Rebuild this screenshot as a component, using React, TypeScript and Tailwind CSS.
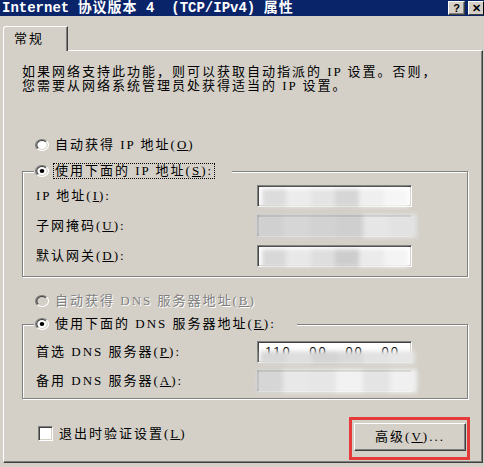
import React from 'react';

const ui = "font-['Liberation_Serif','Noto_Sans_CJK_SC',serif] text-[13px] tracking-[2px] text-black";

function Radio({ checked = false, disabled = false }: { checked?: boolean; disabled?: boolean }) {
  return (
    <svg width="14" height="12" viewBox="0 0 12 12" preserveAspectRatio="none" className="shrink-0">
      <circle cx="6" cy="6" r="5.5" fill={disabled ? '#d4d0c8' : '#fff'} />
      <path d="M2.1 9.9 A5.5 5.5 0 0 1 9.9 2.1" stroke="#808080" fill="none" />
      <path d="M9.9 2.1 A5.5 5.5 0 0 1 2.1 9.9" stroke="#fff" fill="none" />
      <path d="M2.8 9.2 A4.5 4.5 0 0 1 9.2 2.8" stroke="#404040" fill="none" />
      <path d="M9.2 2.8 A4.5 4.5 0 0 1 2.8 9.2" stroke="#d4d0c8" fill="none" />
      {checked && <circle cx="6" cy="6" r="2" fill="#000" />}
    </svg>
  );
}

// blurred address field (the screenshot hides the values)
function Field({ tones, cover = false, text }: { tones: string[]; cover?: boolean; text?: string[] }) {
  return (
    <div className="relative h-[22px] w-[155px] border border-t-[#808080] border-l-[#808080] border-b-white border-r-white bg-white shadow-[inset_1px_1px_0_#404040,inset_-1px_-1px_0_#d4d0c8]">
      {text && (
        <div className="flex h-full items-center justify-around pr-2 pl-1 font-['Liberation_Sans',sans-serif] text-[13px]">
          {text.map((t, i) => (
            <span key={i}>{t}</span>
          ))}
        </div>
      )}
      <div
        className={
          cover
            ? 'absolute -left-[2px] -right-[6px] -top-[2px] -bottom-[2px] flex blur-[2px]'
            : text
              ? 'absolute left-[2px] -right-[4px] top-[9px] -bottom-[2px] flex blur-[2px]'
              : 'absolute left-[4px] right-[3px] top-[3px] -bottom-[1px] flex blur-[2px]'
        }
      >
        {tones.map((t, i) => (
          <div key={i} className={`flex-1 ${t}`} />
        ))}
      </div>
    </div>
  );
}

function Row({ label, children }: { label: React.ReactNode; children: React.ReactNode }) {
  return (
    <div className="grid h-[22px] grid-cols-[221px_155px] items-center">
      <div className="whitespace-nowrap">{label}</div>
      {children}
    </div>
  );
}

export default function App() {
  return (
    <div className={`h-[467px] w-[484px] overflow-hidden bg-[#d4d0c8] ${ui}`}>
      {/* Title bar */}
      <div className="relative flex h-[16px] items-center bg-[#0a246a] pt-px pl-[2px] font-['Liberation_Mono','Noto_Sans_CJK_SC',monospace] text-[14px] font-bold leading-[15px] tracking-normal text-white whitespace-pre">
        <span>Internet </span>
        <span className="tracking-[1px]">协议版本</span>
        <span> 4  (TCP/IPv4) </span>
        <span className="tracking-[1px]">属性</span>
        <div className="ml-auto flex h-[14px] self-start gap-[3px]">
          <div className="flex w-[17px] items-center justify-center border border-t-white border-l-white border-b-[#404040] border-r-[#404040] bg-[#d4d0c8] font-['Liberation_Sans',sans-serif] text-[11px] leading-none text-black shadow-[inset_-1px_-1px_0_#808080]">
            ?
          </div>
          <div className="flex w-[16px] items-center justify-center border border-t-white border-l-white border-b-[#404040] bg-[#d4d0c8] font-['Liberation_Sans',sans-serif] text-[11px] leading-none text-black">
            ✕
          </div>
        </div>
      </div>

      {/* Tab */}
      <div className="mt-[10px] flex pl-[3px]">
        <div className="relative z-10 flex h-[25px] w-[65px] items-center rounded-tl-[3px] border-l border-t border-r border-l-white border-t-white border-r-[#404040] bg-[#d4d0c8] pl-[10px] shadow-[inset_-1px_0_0_#808080]">
          常规
        </div>
      </div>

      {/* Panel */}
      <div className="-mt-px ml-[3px] h-[413px] w-[480px] border border-t-white border-l-white border-r-[#404040] border-b-[#404040] shadow-[inset_-1px_-1px_0_#808080]">
        <p className="mt-[14px] pl-[18px] leading-[14px] whitespace-nowrap">
          如果网络支持此功能，则可以获取自动指派的 IP 设置。否则，
          <br />
          您需要从网络系统管理员处获得适当的 IP 设置。
        </p>

        <div className="mt-[44px] ml-[31px] flex h-4 items-center gap-[6px] whitespace-nowrap">
          <Radio />
          <span>
            自动获得 IP 地址(<u>O</u>)
          </span>
        </div>

        {/* IP group */}
        <div className="relative mt-[18px] ml-[18px] w-[446px] border border-[#808080] pt-[13px] pb-[9px] pl-[13px] shadow-[1px_1px_0_#fff,inset_1px_1px_0_#fff]">
          <div className="absolute -top-[9px] left-[11px] flex h-4 w-[198px] items-center gap-[4px] bg-[#d4d0c8] pl-px whitespace-nowrap">
            <Radio checked />
            <span className="border border-dotted border-black px-px leading-[14px]">
              使用下面的 IP 地址(<u>S</u>):
            </span>
          </div>
          <div className="flex flex-col gap-[8px]">
            <Row label={<>IP 地址(<u>I</u>):</>}>
              <Field tones={['bg-[#dcdcdc]', 'bg-[#ececec]', 'bg-[#e4e4e4]', 'bg-[#d6d6d6]', 'bg-[#efefef]', 'bg-[#f6f6f6]']} />
            </Row>
            <Row label={<>子网掩码(<u>U</u>):</>}>
              <Field cover tones={['bg-[#d0d0d0]', 'bg-[#d6d6d6]', 'bg-[#d2d2d2]', 'bg-[#cfcfcf]', 'bg-[#e6e6e6]', 'bg-[#e2e2e2]']} />
            </Row>
            <Row label={<>默认网关(<u>D</u>):</>}>
              <Field tones={['bg-[#d8d8d8]', 'bg-[#e8e8e8]', 'bg-[#dedede]', 'bg-[#cdcdcd]', 'bg-[#ebebeb]', 'bg-[#f4f4f4]']} />
            </Row>
          </div>
        </div>

        <div className="mt-[16px] ml-[31px] flex h-4 items-center gap-[6px] whitespace-nowrap text-[#808080] [text-shadow:1px_1px_0_#fff]">
          <Radio disabled />
          <span>
            自动获得 DNS 服务器地址(<u>B</u>)
          </span>
        </div>

        {/* DNS group */}
        <div className="relative mt-[15px] ml-[18px] w-[446px] border border-[#808080] pt-[16px] pb-[6px] pl-[13px] shadow-[1px_1px_0_#fff,inset_1px_1px_0_#fff]">
          <div className="absolute -top-[9px] left-[11px] flex h-4 w-[263px] items-center gap-[6px] bg-[#d4d0c8] pl-px whitespace-nowrap">
            <Radio checked />
            <span>
              使用下面的 DNS 服务器地址(<u>E</u>):
            </span>
          </div>
          <div className="flex flex-col gap-[7px]">
            <Row label={<>首选 DNS 服务器(<u>P</u>):</>}>
              <Field text={['110', '.', '00', '.', '00', '.', '00']} tones={['bg-[#d8d8d8]', 'bg-[#dedede]', 'bg-[#d4d4d4]', 'bg-[#d9d9d9]', 'bg-[#e2e2e2]', 'bg-[#e6e6e6]']} />
            </Row>
            <Row label={<>备用 DNS 服务器(<u>A</u>):</>}>
              <Field cover tones={['bg-[#d6d6d6]', 'bg-[#e8e8e8]', 'bg-[#e6e6e6]', 'bg-[#f2f2f2]', 'bg-[#e4e4e4]', 'bg-[#f0f0f0]']} />
            </Row>
          </div>
        </div>

        {/* Bottom row */}
        <div className="mt-[18px] flex items-start">
          <div className="mt-[7px] ml-[34px] flex items-center gap-[6px] whitespace-nowrap">
            <div className="h-[15px] w-[15px] border border-t-[#808080] border-l-[#808080] border-b-white border-r-white bg-white shadow-[inset_1px_1px_0_#404040,inset_-1px_-1px_0_#d4d0c8]" />
            <span>
              退出时验证设置(<u>L</u>)
            </span>
          </div>
          <div className="mr-[12px] ml-auto h-[43px] w-[121px] border-[3px] border-[#e53a3a] pt-[3px] pr-px pl-[2px]">
            <div className="flex h-[28px] items-center justify-center border border-t-white border-l-white border-b-[#404040] border-r-[#404040] bg-[#d4d0c8] shadow-[inset_-1px_-1px_0_#808080]">
              高级(<u>V</u>)...
            </div>
          </div>
        </div>
      </div>
    </div>
  );
}
